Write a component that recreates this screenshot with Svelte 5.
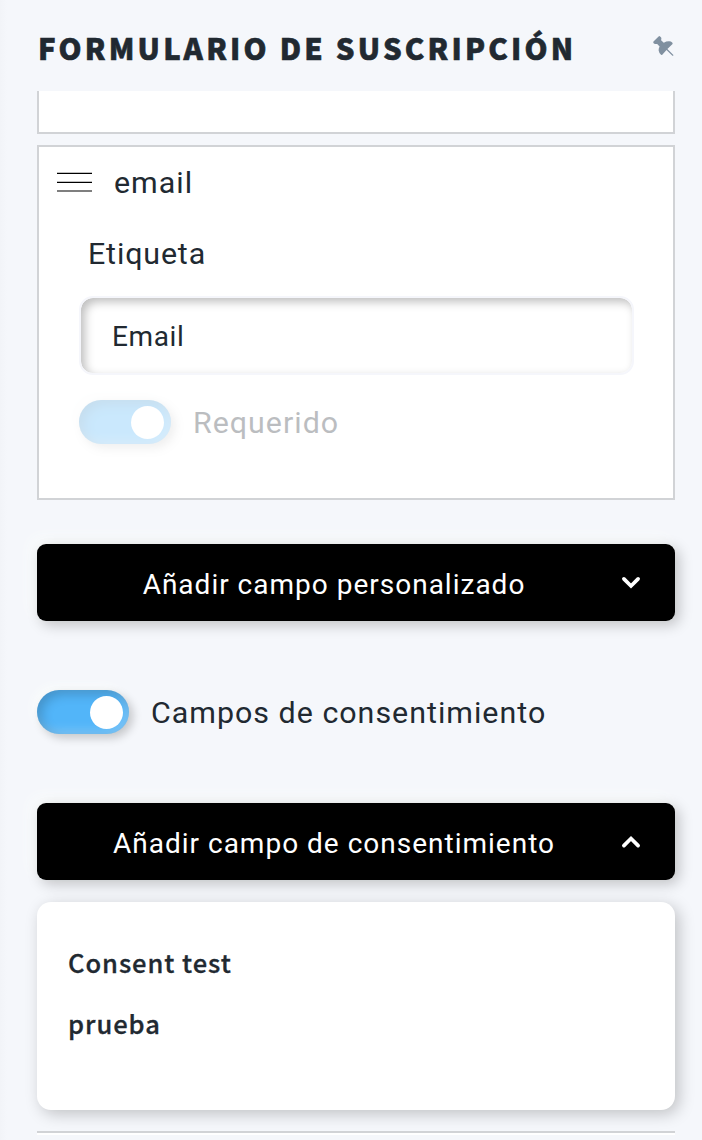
<script lang="ts">
	interface Consent {
		id: number;
		name: string;
	}

	let label = $state('Email');
	let consentEnabled = $state(true);
	let customOpen = $state(false);
	let consentOpen = $state(true);

	const consents: Consent[] = [
		{ id: 1, name: 'Consent test' },
		{ id: 2, name: 'prueba' },
	];
</script>

{#snippet chevron(open: boolean)}
	<svg class="chevron" viewBox="0 0 20 14" aria-hidden="true">
		<path d={open ? 'M2.9 10.6 10 3.5l7.1 7.1' : 'M2.9 2.9 10 10l7.1-7.1'} />
	</svg>
{/snippet}

<div class="panel">
	<header class="header">
		<h2 class="title">Formulario de suscripción</h2>
		<svg class="pin" viewBox="0 0 22 22" aria-hidden="true">
			<path
				d="M.5 6.500 5.600 1.400q.7-.7 1.500 0l.8.8q.7.700.4 1.800l-.2 1.200 2.700 2.500q2.600-1.500 5.300-1.400 2 .1 3.100 1.200.8.8.1 1.700l-4.900 4.900 6 6-.2.700-.8-.1-5.900-5.700-4 4.400q-.9.9-1.700.2-1.700-1.500-2.100-3.800-.3-2.200.9-4.200L4.200 9.100l-2.300-.1Q-.5 8 .5 6.500z"
			/>
		</svg>
	</header>

	<section class="field field-cut"></section>

	<section class="field">
		<div class="field-head">
			<svg class="handle" viewBox="0 0 35 20" aria-hidden="true">
				<path d="M0 1.4h35M0 10.300h35M0 19h35" />
			</svg>
			<span class="field-name">email</span>
		</div>
		<label class="label" for="field-label">Etiqueta</label>
		<input id="field-label" class="input" type="text" bind:value={label} />
		<div class="switch-row disabled">
			<button class="switch on" role="switch" aria-checked="true" aria-label="Requerido" disabled>
				<span class="knob"></span>
			</button>
			<span>Requerido</span>
		</div>
	</section>

	<button class="dropdown" aria-expanded={customOpen} onclick={() => (customOpen = !customOpen)}>
		<span class="dropdown-text">Añadir campo personalizado</span>
		{@render chevron(customOpen)}
	</button>

	<div class="switch-row consent-row">
		<button
			class="switch"
			class:on={consentEnabled}
			role="switch"
			aria-checked={consentEnabled}
			aria-label="Campos de consentimiento"
			onclick={() => (consentEnabled = !consentEnabled)}
		>
			<span class="knob"></span>
		</button>
		<span>Campos de consentimiento</span>
	</div>

	<button class="dropdown" aria-expanded={consentOpen} onclick={() => (consentOpen = !consentOpen)}>
		<span class="dropdown-text">Añadir campo de consentimiento</span>
		{@render chevron(consentOpen)}
	</button>

	{#if consentOpen}
		<ul class="options">
			{#each consents as consent (consent.id)}
				<li class="option">{consent.name}</li>
			{/each}
		</ul>
	{/if}

	<hr class="divider" />
</div>

<style>
	:global(body) {
		margin: 0;
		background: #f5f7fb;
		overflow: hidden;
	}

	.panel {
		box-sizing: border-box;
		width: 702px;
		height: 1140px;
		padding: 0 27px 0 37px;
		overflow: hidden;
		background: linear-gradient(90deg, #f2f4f8 0, #f5f7fb 7px);
		color: #212931;
		font-family: Roboto, sans-serif;
		font-size: 30.4px;
		letter-spacing: 1px;
		white-space: nowrap;
	}

	.header {
		display: flex;
		align-items: flex-start;
		justify-content: space-between;
		height: 91px;
	}

	.title {
		margin: 25px 0 0 1px;
		font-family: 'Noto Sans CJK SC', sans-serif;
		font-size: 29.3px;
		font-weight: 900;
		line-height: 44px;
		letter-spacing: 3.2px;
		text-transform: uppercase;
		-webkit-text-stroke: 0.6px #212931;
	}

	.pin {
		width: 22px;
		height: 22px;
		margin-top: 35px;
		fill: #8090a0;
	}

	.field {
		box-sizing: border-box;
		height: 355px;
		margin-bottom: 44px;
		padding: 17px 39px 0 40px;
		border: 2px solid #d1d3d6;
		background: #fff;
	}

	.field-cut {
		height: 43px;
		margin-bottom: 11px;
		padding: 0;
		border-top: 0;
	}

	.field-head {
		display: flex;
		align-items: center;
		height: 36px;
		margin-left: -22px;
	}

	.handle {
		width: 35px;
		height: 20px;
		margin-right: 22px;
		stroke: #000;
		stroke-width: 1.2;
	}

	.label {
		display: block;
		margin: 36px 0 0 9px;
		line-height: 36px;
		letter-spacing: 0.85px;
	}

	.input {
		box-sizing: border-box;
		display: block;
		width: 555px;
		height: 79px;
		margin-top: 24px;
		padding: 2px 31px 0;
		border: 2px solid #f5f6fb;
		border-radius: 14px;
		outline: 0;
		background: #fff;
		box-shadow:
			inset 4px 4px 10px rgba(0, 0, 0, 0.25),
			inset -4px -4px 10px #fff;
		color: #212931;
		font-family: Roboto, sans-serif;
		font-size: 28px;
		letter-spacing: 0.6px;
	}

	.switch-row {
		display: flex;
		align-items: center;
		height: 44px;
	}

	.disabled {
		margin-top: 25px;
		opacity: 0.3;
	}

	.disabled .switch {
		padding-right: 7px;
	}

	.switch {
		box-sizing: border-box;
		width: 92px;
		height: 44px;
		margin: 0 22px 0 0;
		padding: 5px 6px;
		border: 0;
		border-radius: 22px;
		background: #cbd1d8;
		box-shadow:
			4px 4px 10px rgba(0, 0, 0, 0.2),
			-4px -4px 10px #fafcfc,
			inset 4px 4px 12px rgba(0, 0, 0, 0.2),
			inset -4px -4px 10px rgba(255, 255, 255, 0.25);
	}

	.switch.on {
		background: #52b5f9;
	}

	.knob {
		display: block;
		width: 33px;
		height: 33px;
		border-radius: 50%;
		background: #fff;
	}

	.on .knob {
		margin-left: auto;
	}

	.dropdown {
		box-sizing: border-box;
		display: flex;
		align-items: center;
		width: 638px;
		height: 77px;
		padding: 3px 34px 0 10px;
		border: 0;
		border-radius: 9px;
		background: #000;
		box-shadow:
			4px 4px 14px rgba(0, 0, 0, 0.22),
			-6px -6px 14px #fafcfc;
		color: #fff;
		font-family: Roboto, sans-serif;
		font-size: 28px;
		letter-spacing: 1px;
	}

	.dropdown-text {
		flex: 1;
		text-align: center;
	}

	.chevron {
		width: 20px;
		height: 14px;
		margin-top: -2px;
		fill: none;
		stroke: #fff;
		stroke-width: 3.7;
		stroke-linecap: round;
	}

	.consent-row {
		margin: 69px 0;
	}

	.options {
		box-sizing: border-box;
		height: 208px;
		margin: 22px 0 0;
		padding: 29px 31px;
		border-radius: 14px;
		background: #fff;
		box-shadow: 4px 4px 16px rgba(0, 0, 0, 0.22);
		list-style: none;
	}

	.option {
		height: 61px;
		font-family: 'Noto Sans CJK SC', sans-serif;
		font-size: 25.5px;
		font-weight: 500;
		line-height: 61px;
		letter-spacing: 0.95px;
		-webkit-text-stroke: 0.3px #212931;
	}

	.divider {
		height: 2px;
		margin: 21px 0 0;
		border: 0;
		border-bottom: 2px solid #fff;
		background: #d1d3d6;
		background-clip: padding-box;
	}
</style>
